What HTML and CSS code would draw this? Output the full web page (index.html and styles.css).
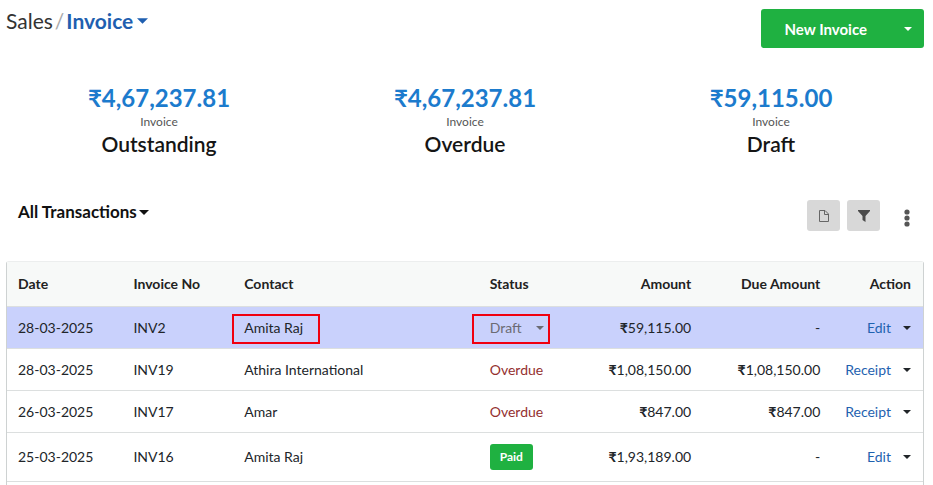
FILE: index.html
```html
<!DOCTYPE html>
<html lang="en">
<head>
<meta charset="utf-8">
<meta name="viewport" content="width=device-width, initial-scale=1">
<title>Sales / Invoice</title>
<link rel="stylesheet" href="styles.css">
</head>
<body>
<header class="topbar">
  <nav class="crumbs">
    <a class="crumb" href="#">Sales</a>
    <span class="slash">/</span>
    <button class="crumb-current" type="button">Invoice <svg class="caret caret-lg" viewBox="0 0 10 5"><path d="M0 0h10L5 5z"/></svg></button>
  </nav>
  <div class="split">
    <button class="split-main" type="button">New Invoice</button>
    <button class="split-more" type="button" aria-label="More options"><svg class="caret" viewBox="0 0 10 5"><path d="M0 0h10L5 5z"/></svg></button>
  </div>
</header>

<section class="stats">
  <div class="stat"><div class="stat-value">₹4,67,237.81</div><div class="stat-kind">Invoice</div><div class="stat-name">Outstanding</div></div>
  <div class="stat"><div class="stat-value">₹4,67,237.81</div><div class="stat-kind">Invoice</div><div class="stat-name">Overdue</div></div>
  <div class="stat"><div class="stat-value">₹59,115.00</div><div class="stat-kind">Invoice</div><div class="stat-name">Draft</div></div>
</section>

<div class="toolbar">
  <button class="view" type="button">All Transactions <svg class="caret" viewBox="0 0 10 5"><path d="M0 0h10L5 5z"/></svg></button>
  <div class="tools">
    <button class="tool" type="button" aria-label="Export"><svg width="10" height="12" viewBox="0 0 10 12" fill="none" stroke="#666" stroke-width="1"><path d="M.5.5h5.500l3.500 3.500v7.500H.5z"/><path d="M5.500.5v4h4"/></svg></button>
    <button class="tool" type="button" aria-label="Filter"><svg width="12" height="12" viewBox="0 0 12 12" fill="#4a4a4a"><path d="M0 0h12v1L7.500 6v6L4.500 10V6L0 1z"/></svg></button>
    <button class="kebab" type="button" aria-label="More"><svg width="6" height="18" viewBox="0 0 6 18" fill="#555"><circle cx="3" cy="3" r="2.600"/><circle cx="3" cy="9" r="2.600"/><circle cx="3" cy="15" r="2.600"/></svg></button>
  </div>
</div>

<main class="panel">
  <table class="grid">
    <colgroup><col class="c-date"><col class="c-no"><col class="c-contact"><col class="c-status"><col class="c-amount"><col class="c-due"><col class="c-action"></colgroup>
    <thead>
      <tr><th>Date</th><th>Invoice No</th><th>Contact</th><th>Status</th><th class="num">Amount</th><th class="num">Due Amount</th><th class="num">Action</th></tr>
    </thead>
    <tbody>
      <tr class="selected">
        <td>28-03-2025</td><td>INV2</td>
        <td><span class="marked">Amita Raj<span class="mark mark-contact"></span></span></td>
        <td><span class="marked"><button class="status-draft" type="button">Draft <svg class="caret" viewBox="0 0 10 5"><path d="M0 0h10L5 5z"/></svg></button><span class="mark mark-status"></span></span></td>
        <td class="num"><span class="cur">₹</span>59,115.00</td><td class="num">-</td>
        <td><div class="action"><a href="#">Edit</a><button type="button" aria-label="More actions"><svg class="caret" viewBox="0 0 10 5"><path d="M0 0h10L5 5z"/></svg></button></div></td>
      </tr>
      <tr>
        <td>28-03-2025</td><td>INV19</td><td>Athira International</td><td class="overdue">Overdue</td>
        <td class="num"><span class="cur">₹</span>1,08,150.00</td><td class="num"><span class="cur">₹</span>1,08,150.00</td>
        <td><div class="action"><a href="#">Receipt</a><button type="button" aria-label="More actions"><svg class="caret" viewBox="0 0 10 5"><path d="M0 0h10L5 5z"/></svg></button></div></td>
      </tr>
      <tr>
        <td>26-03-2025</td><td>INV17</td><td>Amar</td><td class="overdue">Overdue</td>
        <td class="num"><span class="cur">₹</span>847.00</td><td class="num"><span class="cur">₹</span>847.00</td>
        <td><div class="action"><a href="#">Receipt</a><button type="button" aria-label="More actions"><svg class="caret" viewBox="0 0 10 5"><path d="M0 0h10L5 5z"/></svg></button></div></td>
      </tr>
      <tr class="tall">
        <td>25-03-2025</td><td>INV16</td><td>Amita Raj</td><td><span class="paid">Paid</span></td>
        <td class="num"><span class="cur">₹</span>1,93,189.00</td><td class="num">-</td>
        <td><div class="action"><a href="#">Edit</a><button type="button" aria-label="More actions"><svg class="caret" viewBox="0 0 10 5"><path d="M0 0h10L5 5z"/></svg></button></div></td>
      </tr>
    </tbody>
  </table>
</main>
</body>
</html>
```
FILE: styles.css
```css
* { box-sizing: border-box; }

body {
  margin: 0;
  padding: 9px 9px 0 6px;
  min-height: 100vh;
  display: flex;
  flex-direction: column;
  font-family: Lato, "Liberation Sans", sans-serif;
  font-size: 14px;
  line-height: 20px;
  color: #212529;
  background: #fff;
}

button {
  font: inherit;
  color: inherit;
  border: 0;
  padding: 0;
  background: none;
  cursor: pointer;
}

a { color: #1f62b0; text-decoration: none; }

.caret { width: 8px; height: 4px; fill: currentColor; flex: none; }
.caret-lg { width: 11px; height: 6px; }

.topbar {
  display: flex;
  justify-content: space-between;
  align-items: flex-start;
}

.crumbs {
  display: flex;
  align-items: center;
  gap: 2px;
  font-size: 21px;
  line-height: 24px;
}
.crumb { color: #333; }
.slash { color: #aaa; }
.crumb-current {
  display: flex;
  align-items: center;
  gap: 4px;
  font-weight: 700;
  color: #1f5fb0;
}

.split {
  display: flex;
  height: 39px;
  border-radius: 3px;
  background: #1fb141;
  color: #fff;
}
.split-main {
  padding: 0 24px;
  font-size: 15px;
  font-weight: 700;
}
.split-more {
  width: 33px;
  display: flex;
  align-items: center;
  justify-content: center;
}

.stats {
  display: grid;
  grid-template-columns: repeat(3, 1fr);
  margin-top: 33px;
  text-align: center;
}
.stat-value {
  font-size: 24px;
  line-height: 33px;
  font-weight: 700;
  color: #1c7bcd;
}
.stat-kind {
  font-size: 12px;
  line-height: 16px;
  color: #555;
}
.stat-name {
  font-size: 21px;
  line-height: 28px;
  font-weight: 600;
  color: #151515;
}

.toolbar {
  display: flex;
  justify-content: space-between;
  align-items: flex-start;
  margin-top: 42px;
  padding: 0 14px 0 12px;
}
.view {
  display: flex;
  align-items: center;
  gap: 2px;
  font-size: 17px;
  line-height: 24px;
  font-weight: 700;
  color: #111;
}
.view .caret { width: 10px; height: 5px; }
.tools { display: flex; gap: 7px; }
.tool {
  width: 33px;
  height: 31px;
  display: flex;
  align-items: center;
  justify-content: center;
  border-radius: 3px;
  background: #d8d8d8;
}
.kebab { height: 36px; margin-left: 17px; display: flex; align-items: center; }

.panel {
  flex: 1;
  margin-top: 25px;
  border: 1px solid #ced2d2;
  border-top-color: #eceeee;
  border-bottom: 0;
  border-radius: 3px 3px 0 0;
}

.grid {
  width: 100%;
  table-layout: fixed;
  border-collapse: separate;
  border-spacing: 0;
}
.c-date { width: 12.600%; }
.c-no { width: 12.100%; }
.c-contact { width: 26.800%; }
.c-status { width: 12%; }
.c-amount { width: 12.500%; }
.c-due { width: 14.100%; }
.c-action { width: 9.900%; }

.grid th, .grid td {
  height: 42px;
  padding: 0 12px 0 11px;
  text-align: left;
  white-space: nowrap;
  border-bottom: 1px solid #dcdfdf;
}
.grid th {
  height: 45px;
  font-weight: 700;
  background: #f7f9f8;
  color: #222;
}
.grid .num { text-align: right; }
.grid .tall td { height: 49px; }
.selected { background: #c9d1fc; }
.cur { font-weight: 700; }
.overdue { color: #94302f; }

.action {
  display: flex;
  justify-content: flex-end;
  align-items: center;
  gap: 12px;
}
.action button { display: flex; }

.status-draft {
  display: flex;
  align-items: center;
  gap: 14px;
  color: #6b6b73;
}

.marked { position: relative; display: inline-block; }
.mark {
  position: absolute;
  top: -4px;
  bottom: -6px;
  border: 2px solid #f0000f;
  pointer-events: none;
}
.mark-contact { left: -12px; right: -17px; }
.mark-status { left: -18px; right: -6px; }

.paid {
  display: inline-block;
  padding: 3px 10px;
  border-radius: 3px;
  font-size: 12px;
  font-weight: 700;
  color: #fff;
  background: #1fb141;
}
```
